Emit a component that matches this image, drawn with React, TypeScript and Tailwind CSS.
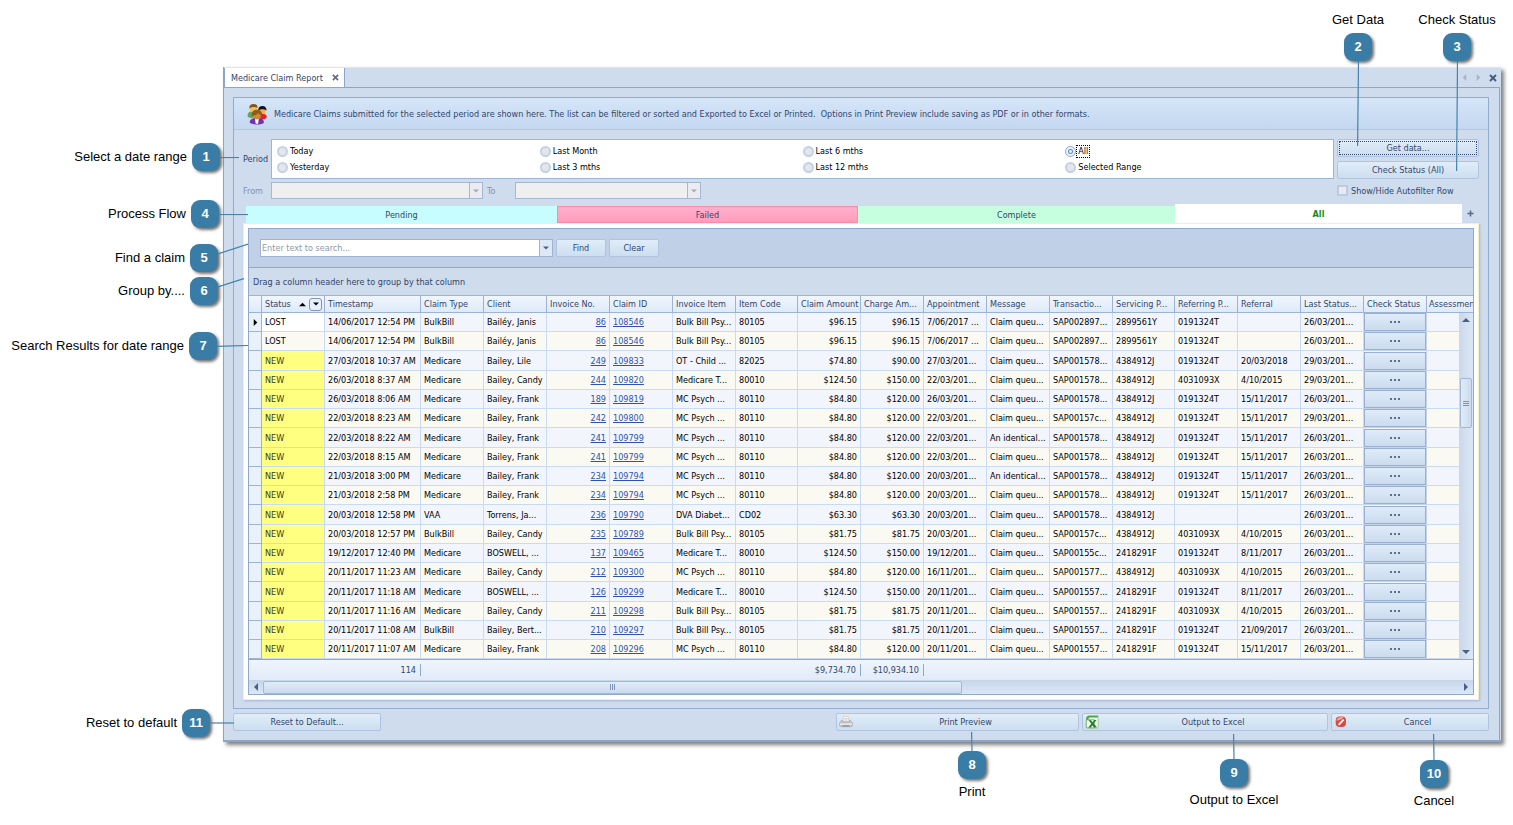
import React from "react";

type Row = {
  status: string;
  time: string;
  type: string;
  client: string;
  invoice: string;
  claim: string;
  item: string;
  code: string;
  amount: string;
  charge: string;
  appt: string;
  message: string;
  trans: string;
  servicing: string;
  referring: string;
  referral: string;
  last: string;
};

const data = `
LOST|14/06/2017 12:54 PM|BulkBill|Bailéy, Janis|86|108546|Bulk Bill Psy...|80105|$96.15|$96.15|7/06/2017 ...|Claim queu...|SAP002897...|2899561Y|0191324T||26/03/201...
LOST|14/06/2017 12:54 PM|BulkBill|Bailéy, Janis|86|108546|Bulk Bill Psy...|80105|$96.15|$96.15|7/06/2017 ...|Claim queu...|SAP002897...|2899561Y|0191324T||26/03/201...
NEW|27/03/2018 10:37 AM|Medicare|Bailey, Lile|249|109833|OT - Child ...|82025|$74.80|$90.00|27/03/201...|Claim queu...|SAP001578...|4384912J|0191324T|20/03/2018|29/03/201...
NEW|26/03/2018 8:37 AM|Medicare|Bailey, Candy|244|109820|Medicare T...|80010|$124.50|$150.00|22/03/201...|Claim queu...|SAP001578...|4384912J|4031093X|4/10/2015|29/03/201...
NEW|26/03/2018 8:06 AM|Medicare|Bailey, Frank|189|109819|MC Psych ...|80110|$84.80|$120.00|26/03/201...|Claim queu...|SAP001578...|4384912J|0191324T|15/11/2017|26/03/201...
NEW|22/03/2018 8:23 AM|Medicare|Bailey, Frank|242|109800|MC Psych ...|80110|$84.80|$120.00|22/03/201...|Claim queu...|SAP00157c...|4384912J|0191324T|15/11/2017|29/03/201...
NEW|22/03/2018 8:22 AM|Medicare|Bailey, Frank|241|109799|MC Psych ...|80110|$84.80|$120.00|22/03/201...|An identical...|SAP001578...|4384912J|0191324T|15/11/2017|26/03/201...
NEW|22/03/2018 8:15 AM|Medicare|Bailey, Frank|241|109799|MC Psych ...|80110|$84.80|$120.00|22/03/201...|Claim queu...|SAP001578...|4384912J|0191324T|15/11/2017|26/03/201...
NEW|21/03/2018 3:00 PM|Medicare|Bailey, Frank|234|109794|MC Psych ...|80110|$84.80|$120.00|20/03/201...|An identical...|SAP001578...|4384912J|0191324T|15/11/2017|26/03/201...
NEW|21/03/2018 2:58 PM|Medicare|Bailey, Frank|234|109794|MC Psych ...|80110|$84.80|$120.00|20/03/201...|Claim queu...|SAP001578...|4384912J|0191324T|15/11/2017|26/03/201...
NEW|20/03/2018 12:58 PM|VAA|Torrens, Ja...|236|109790|DVA Diabet...|CD02|$63.30|$63.30|20/03/201...|Claim queu...|SAP001578...|4384912J|||26/03/201...
NEW|20/03/2018 12:57 PM|BulkBill|Bailey, Candy|235|109789|Bulk Bill Psy...|80105|$81.75|$81.75|20/03/201...|Claim queu...|SAP00157c...|4384912J|4031093X|4/10/2015|26/03/201...
NEW|19/12/2017 12:40 PM|Medicare|BOSWELL, ...|137|109465|Medicare T...|80010|$124.50|$150.00|19/12/201...|Claim queu...|SAP00155c...|2418291F|0191324T|8/11/2017|26/03/201...
NEW|20/11/2017 11:23 AM|Medicare|Bailey, Candy|212|109300|MC Psych ...|80110|$84.80|$120.00|16/11/201...|Claim queu...|SAP001577...|4384912J|4031093X|4/10/2015|26/03/201...
NEW|20/11/2017 11:18 AM|Medicare|BOSWELL, ...|126|109299|Medicare T...|80010|$124.50|$150.00|20/11/201...|Claim queu...|SAP001557...|2418291F|0191324T|8/11/2017|26/03/201...
NEW|20/11/2017 11:16 AM|Medicare|Bailey, Candy|211|109298|Bulk Bill Psy...|80105|$81.75|$81.75|20/11/201...|Claim queu...|SAP001557...|2418291F|4031093X|4/10/2015|26/03/201...
NEW|20/11/2017 11:08 AM|BulkBill|Bailey, Bert...|210|109297|Bulk Bill Psy...|80105|$81.75|$81.75|20/11/201...|Claim queu...|SAP001557...|2418291F|0191324T|21/09/2017|26/03/201...
NEW|20/11/2017 11:07 AM|Medicare|Bailey, Frank|208|109296|MC Psych ...|80110|$84.80|$120.00|20/11/201...|Claim queu...|SAP001557...|2418291F|0191324T|15/11/2017|26/03/201...
`;

const rows: Row[] = data
  .trim()
  .split("\n")
  .map((line) => {
    const [status, time, type, client, invoice, claim, item, code, amount, charge, appt, message, trans, servicing, referring, referral, last] = line.split("|");
    return { status, time, type, client, invoice, claim, item, code, amount, charge, appt, message, trans, servicing, referring, referral, last };
  });

const columns: { label: string; width: string }[] = [
  { label: "Status", width: "w-[63px]" },
  { label: "Timestamp", width: "w-[96px]" },
  { label: "Claim Type", width: "w-[63px]" },
  { label: "Client", width: "w-[63px]" },
  { label: "Invoice No.", width: "w-[63px]" },
  { label: "Claim ID", width: "w-[63px]" },
  { label: "Invoice Item", width: "w-[63px]" },
  { label: "Item Code", width: "w-[62px]" },
  { label: "Claim Amount", width: "w-[63px]" },
  { label: "Charge Am...", width: "w-[63px]" },
  { label: "Appointment", width: "w-[63px]" },
  { label: "Message", width: "w-[63px]" },
  { label: "Transactio...", width: "w-[63px]" },
  { label: "Servicing P...", width: "w-[62px]" },
  { label: "Referring P...", width: "w-[63px]" },
  { label: "Referral", width: "w-[63px]" },
  { label: "Last Status...", width: "w-[63px]" },
  { label: "Check Status", width: "w-[63px]" },
];

const buttonFace =
  "flex h-[18px] items-center justify-center rounded-[2px] border border-[#b1c4df] bg-linear-to-b from-[#e0edf9] to-[#cddeef] text-[#32466b]";

function PeopleIcon() {
  return (
    <svg viewBox="0 0 22 22" className="size-[22px]" aria-hidden="true">
      <path d="M1.500 12.500c.3-2.500 1.500-4 4-4l3.500 3-1.500 3.500c-3.500 0-6-.500-6-2.500z" fill="#5aa862" />
      <path d="M13.500 13l3-2.500c2.800.3 4.500 1.800 4.300 4-1.500 2-4.500 2-6.300 1.500z" fill="#ee1f24" />
      <circle cx="7.500" cy="5.600" r="3.700" fill="#ecc052" />
      <path d="M3.200 5.400C3.200 2.400 5 1 7.500 1s4.200 1.200 4.200 3.800c-2.500-1.200-6-1-8.500.6z" fill="#84551a" />
      <circle cx="16.200" cy="7.700" r="3.400" fill="#f3b04e" />
      <path d="M12.200 7.400c0-2.900 1.700-4.400 4.300-4.400s4 1.600 4 4.600c-2.300-1.700-5.600-1.900-8.300-.2z" fill="#12121a" />
      <path d="M3.800 20c-.3-3.500 2.200-5 7-5s7.500 1.500 7 5c-3.500 2-10.500 2-14 0z" fill="#7433ad" />
      <path d="M9 16h3.800l-.7 4.800H9.700z" fill="#fff" />
      <circle cx="10.800" cy="12" r="4.400" fill="#d08b2e" />
      <path d="M5.800 13.200C5 9.200 7.400 6.800 10.800 6.800s5.800 2.200 5.200 6.200c-1.800-.8-3-1.800-3.500-3-1.500 1.700-4.200 2.800-6.700 3.200z" fill="#93581a" />
    </svg>
  );
}

function PrinterIcon() {
  return (
    <svg viewBox="0 0 14 12" className="h-3 w-[14px]" aria-hidden="true">
      <path d="M4.500.5h4.500l1 5H4z" fill="#fdfdfd" stroke="#c0c0c0" strokeWidth=".6" />
      <path d="M2.200 4.500h1.600V6h6.400V4.500h1.600L13.500 7.200v2.600l-1.500 1H2l-1.500-1V7.200z" fill="#c4c4c6" stroke="#a2a2a6" strokeWidth=".5" />
      <path d="M1 7.500h12v1.200H1z" fill="#f6f6f6" />
      <path d="M3.500 9.300h7v1.200h-7z" fill="#8d8d90" />
      <path d="M5.500 2.500h3M5.300 4h3.500" stroke="#aaa" strokeWidth=".6" />
    </svg>
  );
}

function SpreadsheetIcon() {
  return (
    <svg viewBox="0 0 14 14" className="size-[14px]" aria-hidden="true">
      <path d="M3.500.8h9.700v12.400H3.500z" fill="#eef6ec" stroke="#8cc487" strokeWidth=".7" />
      <path d="M1 4.500C1 2 2 .8 4.200.8h8.600v1.800H5c-1.200 0-1.900.8-1.900 2.200v7H1z" fill="#4fa64a" />
      <path d="M1.200 4.800h8v8h-8z" fill="#f7fbf6" stroke="#57ab51" strokeWidth=".8" />
      <path d="M3.500 5.200h2.600l1.500 2.200L9.300 5h2.200L8.700 8.600l3.300 3.900H9.200L7.400 10.200l-1.700 2.300H3.300l3-3.800z" fill="#1f7d28" />
    </svg>
  );
}

function CancelIcon() {
  return (
    <svg viewBox="0 0 12 12" className="size-3" aria-hidden="true">
      <rect x=".7" y=".5" width="10.300" height="10.500" rx="4" fill="#db4a42" />
      <path d="M1.200 4.500C2 1.500 4.500.7 8.500 1c-1 2.300-3.500 3.500-7.300 3.500z" fill="#f3a49b" />
      <path d="M3 8.300L8 3l1.300 1.200-5 5.300z" fill="#fff" />
    </svg>
  );
}

function Arrow({ dir, className }: { dir: "up" | "down" | "left" | "right"; className: string }) {
  const d = { up: "M0 6L4 2l4 4z", down: "M0 2h8L4 6z", left: "M6 0v8L2 4z", right: "M2 0l4 4-4 4z" }[dir];
  return (
    <svg viewBox="0 0 8 8" className={className} fill="currentColor" aria-hidden="true">
      <path d={d} />
    </svg>
  );
}

function Cross({ className }: { className: string }) {
  return (
    <svg viewBox="0 0 8 8" className={className} fill="none" stroke="currentColor" strokeWidth="1.800" aria-hidden="true">
      <path d="M1 1l6 6M7 1L1 7" />
    </svg>
  );
}

function Radio({ label, checked }: { label: string; checked?: boolean }) {
  return (
    <label className="flex h-4 items-center gap-px text-black">
      <input
        type="radio"
        name="period"
        defaultChecked={checked}
        className="peer size-[11px] appearance-none rounded-full border-2 border-[#c3d1e5] bg-[#e4e6e8] checked:border checked:border-[#8fa9cf] checked:bg-[radial-gradient(circle,#dceafa_1px,#5f83b8_2px,#eaf3fd_3px)]"
      />
      <span className="px-px leading-[11px] outline-dotted outline-0 outline-black peer-checked:outline-1">{label}</span>
    </label>
  );
}

function DateBox({ id, label, className, labelClass }: { id: string; label: string; className: string; labelClass: string }) {
  return (
    <>
      <label htmlFor={id} className={labelClass}>{label}</label>
      <div className={className}>
        <input id={id} disabled className="min-w-0 flex-1 bg-[#efefef]" />
        <button disabled aria-label={label + " calendar"} className="flex w-[13px] items-center justify-center border-l border-[#a4b8d4] bg-[#ececf0]">
          <Arrow dir="down" className="size-[6px] text-[#a3aab8]" />
        </button>
      </div>
    </>
  );
}

function Badge({ n }: { n: number }) {
  return (
    <span className="flex size-7 shrink-0 items-center justify-center rounded-[9px] bg-[#397ca5] text-[13px] font-bold text-white shadow-[2px_2px_3px_rgba(0,0,0,0.55)]">
      {n}
    </span>
  );
}

/* Numbered note at the left of the window. */
function SideNote({ n, text, className }: { n: number; text: string; className: string }) {
  return (
    <div className={"absolute left-0 flex items-center justify-end gap-[5px] " + className}>
      <span>{text}</span>
      <Badge n={n} />
    </div>
  );
}

function SideLine({ className, box, d }: { className: string; box: string; d: string }) {
  return (
    <svg viewBox={box} className={"absolute " + className} fill="none" stroke="#4583ab" strokeWidth="1.200" aria-hidden="true">
      <path d={d} />
    </svg>
  );
}

const cell = "overflow-hidden border-r border-b border-[#c8daf4] px-[3px]";

function ClaimRow({ row, index }: { row: Row; index: number }) {
  const isNew = row.status === "NEW";
  return (
    <tr className={(index % 2 ? "bg-[#fbfaf2] " : "bg-[#f2f5fb] ") + (index % 4 === 2 ? "h-5" : "h-[19px]")}>
      <td className="border-r border-b border-[#9fb4d3] bg-[#e9f1fb]">
        {index === 0 && <Arrow dir="right" className="ml-[3px] size-[7px] text-black" />}
      </td>
      <td className={cell + (isNew ? " bg-[#ffff80] text-[#3c3c14]" : index === 0 ? " bg-white" : "")}>{row.status}</td>
      <td className={cell}>{row.time}</td>
      <td className={cell}>{row.type}</td>
      <td className={cell}>{row.client}</td>
      <td className={cell + " text-right"}><a href="#invoice" className="text-[#2f52b0] underline">{row.invoice}</a></td>
      <td className={cell}><a href="#claim" className="text-[#2f52b0] underline">{row.claim}</a></td>
      <td className={cell}>{row.item}</td>
      <td className={cell}>{row.code}</td>
      <td className={cell + " text-right"}>{row.amount}</td>
      <td className={cell + " text-right"}>{row.charge}</td>
      <td className={cell}>{row.appt}</td>
      <td className={cell}>{row.message}</td>
      <td className={cell}>{row.trans}</td>
      <td className={cell}>{row.servicing}</td>
      <td className={cell}>{row.referring}</td>
      <td className={cell}>{row.referral}</td>
      <td className={cell}>{row.last}</td>
      <td className="border-r border-b border-[#c3d3ea] p-0">
        <button aria-label="Check status" className="flex h-[18px] w-full items-center justify-center gap-[2px] border border-[#9ab0d0] bg-linear-to-b from-[#dfebf8] to-[#cbdcee]">
          <i className="size-[2px] bg-[#5f6e8c]" />
          <i className="size-[2px] bg-[#5f6e8c]" />
          <i className="size-[2px] bg-[#5f6e8c]" />
        </button>
      </td>
      <td className="border-b border-[#c8daf4]" />
    </tr>
  );
}

function ClaimTable() {
  return (
    <div className="relative">
      <table className="w-full table-fixed border-separate border-spacing-0 whitespace-nowrap text-black">
        <thead>
          <tr className="h-[18px] text-left text-[#32466b]">
            <th className="w-[13px] border-y border-r border-[#9cb3d4] bg-linear-to-b from-[#f0f6fd] to-[#dfeaf8]" />
            {columns.map((c) => (
              <th key={c.label} className={"overflow-hidden border-y border-r border-[#9cb3d4] bg-linear-to-b from-[#f0f6fd] to-[#dfeaf8] p-0 pl-[3px] font-normal " + c.width}>
                {c.label === "Status" ? (
                  <span className="flex items-center">
                    {c.label}
                    <Arrow dir="up" className="ml-auto size-[7px] text-black" />
                    <button aria-label="Filter status" className="mr-[2px] ml-[3px] flex h-[13px] w-[13px] items-center justify-center rounded-[3px] border border-[#8296b8] bg-[#e6effa]">
                      <Arrow dir="down" className="size-[6px] text-black" />
                    </button>
                  </span>
                ) : (
                  c.label
                )}
              </th>
            ))}
            <th className="overflow-hidden border-y border-[#9cb3d4] bg-linear-to-b from-[#f0f6fd] to-[#dfeaf8] p-0 pl-[2px] font-normal">Assessmen</th>
          </tr>
        </thead>
        <tbody>
          {rows.map((row, i) => (
            <ClaimRow key={i} row={row} index={i} />
          ))}
        </tbody>
        <tfoot>
          <tr className="h-[21px] bg-linear-to-b from-[#f0f5fc] to-[#e1ebf8] text-right text-[#32466b]">
            <td colSpan={3} className="border-t border-[#8fa9cd] p-0"><span className="inline-block border-r border-[#8fa9cd] pr-1">114</span></td>
            <td colSpan={7} className="border-t border-[#8fa9cd] p-0"><span className="inline-block border-r border-[#8fa9cd] pr-1">$9,734.70</span></td>
            <td className="border-t border-[#8fa9cd] p-0"><span className="inline-block border-r border-[#8fa9cd] pr-1">$10,934.10</span></td>
            <td colSpan={9} className="border-t border-[#8fa9cd]" />
          </tr>
        </tfoot>
      </table>
      <div className="absolute top-[18px] right-0 bottom-[21px] flex w-[14px] flex-col items-center bg-linear-to-r from-[#c9d8ea] to-[#dbe7f4] py-[3px] text-[#4a5f86]">
        <Arrow dir="up" className="size-2" />
        <div className="mt-[54px] flex h-[50px] w-3 flex-col items-center justify-center gap-px rounded-[2px] border border-[#a3b8d8] bg-linear-to-r from-[#dfebf8] to-[#cbdbee]">
          <i className="h-px w-[6px] bg-[#7f94bb]" />
          <i className="h-px w-[6px] bg-[#7f94bb]" />
          <i className="h-px w-[6px] bg-[#7f94bb]" />
        </div>
        <Arrow dir="down" className="mt-auto size-2" />
      </div>
    </div>
  );
}

function ClaimGrid() {
  return (
    <div className="border border-[#8fa9cd] bg-[#cfdcec]">
      <div className="flex h-[39px] items-center gap-[3px] border-b border-[#8fa9cd] bg-[#c0d0e7] pl-[11px]">
        <div className="flex h-[18px] w-[293px] border border-[#a0b4d2] bg-white">
          <input aria-label="Search" placeholder="Enter text to search..." className="min-w-0 flex-1 pl-px outline-none placeholder:text-[#8e99ab]" />
          <button aria-label="Recent searches" className="flex w-[13px] items-center justify-center border-l border-[#a0b4d2] bg-[#dde8f5]">
            <Arrow dir="down" className="size-[6px] text-[#4a5f86]" />
          </button>
        </div>
        <button className={buttonFace + " w-[50px]"}>Find</button>
        <button className={buttonFace + " w-[50px]"}>Clear</button>
      </div>
      <div className="flex h-[27px] items-center pl-1 text-[#32466b]">Drag a column header here to group by that column</div>
      <ClaimTable />
      <div className="flex h-[14px] items-center bg-linear-to-b from-[#c6d6e9] to-[#dbe7f4] px-[3px] text-[#4a5f86]">
        <Arrow dir="left" className="mr-[3px] size-2" />
        <div className="flex h-[13px] w-[57.4%] items-center justify-center gap-px rounded-[2px] border border-[#a3b8d8] bg-linear-to-b from-[#dfebf8] to-[#cbdbee]">
          <i className="h-[6px] w-px bg-[#7f94bb]" />
          <i className="h-[6px] w-px bg-[#7f94bb]" />
          <i className="h-[6px] w-px bg-[#7f94bb]" />
        </div>
        <Arrow dir="right" className="ml-auto size-2" />
      </div>
    </div>
  );
}

function ReportWindow() {
  return (
    <main className="border-b-2 border-l border-[#8ba6ca] bg-[#cfdcee] font-['DejaVu_Sans_Condensed','DejaVu_Sans',sans-serif] text-[9px] leading-3 text-[#32466b] shadow-[3px_3px_4px_rgba(0,0,0,0.5)]">
      <div className="flex h-5 items-center border-t border-[#dfe6ef]">
        <div className="flex h-full w-[121px] items-center border-x border-[#8ba6ca] bg-white pl-[6px]">
          Medicare Claim Report
          <button aria-label="Close tab" className="mr-[5px] ml-auto"><Cross className="size-[7px] text-[#5a6884]" /></button>
        </div>
        <div className="ml-auto flex items-center gap-[7px] pr-1">
          <button aria-label="Previous tab"><Arrow dir="left" className="size-[7px] text-[#a3b5cf]" /></button>
          <button aria-label="Next tab"><Arrow dir="right" className="size-[7px] text-[#a3b5cf]" /></button>
          <button aria-label="Close"><Cross className="size-2 text-[#44587f]" /></button>
        </div>
      </div>
      <div className="mr-px border-t border-r border-[#8ba6ca] pt-[9px] pr-[10px] pb-[9px] pl-[9px]">
        <section className="border border-[#93abce]">
          <header className="flex h-8 items-center gap-[6px] border-b border-[#b3c7e2] bg-linear-to-b from-[#d6e6f9] to-[#c3d7f0] pl-3">
            <PeopleIcon />
            <p>Medicare Claims submitted for the selected period are shown here. The list can be filtered or sorted and Exported to Excel or Printed.&nbsp; Options in Print Preview include saving as PDF or in other formats.</p>
          </header>
          <div className="px-[9px] pt-[9px] pb-2">
            <form className="flex gap-[3px]" onSubmit={(e) => e.preventDefault()}>
              <div className="flex flex-1 flex-col gap-[3px]">
                <div className="flex items-center">
                  <span id="period-label" className="w-7">Period</span>
                  <div role="radiogroup" aria-labelledby="period-label" className="grid h-10 flex-1 grid-flow-col grid-cols-4 grid-rows-2 border border-[#9fb4d2] bg-white px-[5px] py-[3px]">
                    <Radio label="Today" />
                    <Radio label="Yesterday" />
                    <Radio label="Last Month" />
                    <Radio label="Last 3 mths" />
                    <Radio label="Last 6 mths" />
                    <Radio label="Last 12 mths" />
                    <Radio label="All" checked />
                    <Radio label="Selected Range" />
                  </div>
                </div>
                <div className="flex items-center text-[#8593aa]">
                  <DateBox id="from" label="From" labelClass="w-7" className="flex h-[17px] w-[212px] border border-[#a4b8d4]" />
                  <DateBox id="to" label="To" labelClass="ml-1 w-7" className="flex h-[17px] w-[186px] border border-[#a4b8d4]" />
                </div>
              </div>
              <div className="flex w-[142px] flex-col gap-1">
                <button className={buttonFace + " outline-1 -outline-offset-3 outline-dotted outline-[#32466b]"}>Get data...</button>
                <button className={buttonFace}>Check Status (All)</button>
                <label className="flex h-[15px] items-center gap-[3px]">
                  <input type="checkbox" className="size-[11px] appearance-none border-2 border-[#bccbe2] bg-[#e9ebee]" />
                  Show/Hide Autofilter Row
                </label>
              </div>
            </form>
            <div className="mt-[5px] flex items-end pl-[3px]">
              <div role="tablist" className="grid flex-1 grid-cols-[311fr_301fr_317fr_287fr] items-end">
                <button role="tab" className="h-[17px] bg-[#c8fdff]">Pending</button>
                <button role="tab" className="h-[17px] border border-[#fb8ca8] bg-linear-to-b from-[#ffb0cd] to-[#ff9dbb]">Failed</button>
                <button role="tab" className="h-[17px] bg-[#c6ffdf]">Complete</button>
                <button role="tab" aria-selected="true" className="h-[19px] bg-white font-bold text-[#138a13]">All</button>
              </div>
              <button aria-label="Add tab" className="flex h-[19px] w-[17px] items-center justify-center">
                <svg viewBox="0 0 8 8" className="size-[7px]" stroke="#5a6a8c" strokeWidth="1.800" aria-hidden="true"><path d="M4 .5v7M.5 4h7" /></svg>
              </button>
            </div>
            <div className="border border-[#f4f1c4] bg-white p-1 shadow-[1px_1px_2px_rgba(90,110,150,0.35)]">
              <ClaimGrid />
            </div>
          </div>
        </section>
        <footer className="mt-1 flex gap-[3px]">
          <button className={buttonFace + " w-[148px]"}>Reset to Default...</button>
          <button className={buttonFace + " ml-auto w-[243px] pl-[2px]"}>
            <PrinterIcon />
            <span className="flex-1">Print Preview</span>
          </button>
          <button className={buttonFace + " w-[246px] pl-[2px]"}>
            <SpreadsheetIcon />
            <span className="flex-1">Output to Excel</span>
          </button>
          <button className={buttonFace + " w-[158px] pl-[3px]"}>
            <CancelIcon />
            <span className="flex-1">Cancel</span>
          </button>
        </footer>
      </div>
    </main>
  );
}

export default function App() {
  return (
    <div className="relative min-h-screen min-w-[1500px] bg-white pt-[67px] pr-3 pb-20 pl-[223px] font-['Liberation_Sans',Arial,sans-serif] text-[13px] leading-4 text-black">
      <ReportWindow />

      <SideNote n={1} text="Select a date range" className="top-[143px] w-[220px]" />
      <SideNote n={4} text="Process Flow" className="top-[200px] w-[219px]" />
      <SideNote n={5} text="Find a claim" className="top-[244px] w-[218px]" />
      <SideNote n={6} text="Group by...." className="top-[277px] w-[218px]" />
      <SideNote n={7} text="Search Results for date range" className="top-[332px] w-[217px]" />
      <SideNote n={11} text="Reset to default" className="top-[709px] w-[210px]" />

      <SideLine className="top-[157px] left-[220px] h-[2px] w-[19px]" box="0 0 19 2" d="M0 .5h19" />
      <SideLine className="top-[214px] left-[219px] h-[2px] w-[29px]" box="0 0 29 2" d="M0 .5h29" />
      <SideLine className="top-[243px] left-[218px] h-[12px] w-[30px]" box="0 0 30 12" d="M0 11L30 1" />
      <SideLine className="top-[278px] left-[218px] h-[10px] w-[26px]" box="0 0 26 10" d="M0 9L26 .5" />
      <SideLine className="top-[345px] left-[217px] h-[2px] w-[31px]" box="0 0 31 2" d="M0 1.300L31 .5" />
      <SideLine className="top-[722px] left-[210px] h-[2px] w-[24px]" box="0 0 24 2" d="M0 1h24" />

      <div className="absolute top-3 right-[99px] flex w-28 flex-col items-center gap-[5px]">
        <span>Get Data</span>
        <Badge n={2} />
      </div>
      <div className="absolute top-3 right-0 flex w-28 flex-col items-center gap-[5px]">
        <span>Check Status</span>
        <Badge n={3} />
      </div>
      <SideLine className="top-[61px] right-[154px] h-[85px] w-[2px]" box="0 0 2 85" d="M1.500 0L.6 85" />
      <SideLine className="top-[61px] right-[55px] h-[110px] w-[2px]" box="0 0 2 110" d="M1.500 0L.6 110" />

      <div className="absolute top-[751px] right-[485px] flex w-28 flex-col items-center gap-[5px]">
        <Badge n={8} />
        <span>Print</span>
      </div>
      <div className="absolute top-[759px] right-[223px] flex w-28 flex-col items-center gap-[5px]">
        <Badge n={9} />
        <span>Output to Excel</span>
      </div>
      <div className="absolute top-[760px] right-[23px] flex w-28 flex-col items-center gap-[5px]">
        <Badge n={10} />
        <span>Cancel</span>
      </div>
      <SideLine className="top-[732px] right-[540px] h-[19px] w-[2px]" box="0 0 2 19" d="M.6 0L1 19" />
      <SideLine className="top-[734px] right-[278px] h-[25px] w-[2px]" box="0 0 2 25" d="M.6 0L1 25" />
      <SideLine className="top-[734px] right-[78px] h-[26px] w-[2px]" box="0 0 2 26" d="M.6 0L1 26" />
    </div>
  );
}
